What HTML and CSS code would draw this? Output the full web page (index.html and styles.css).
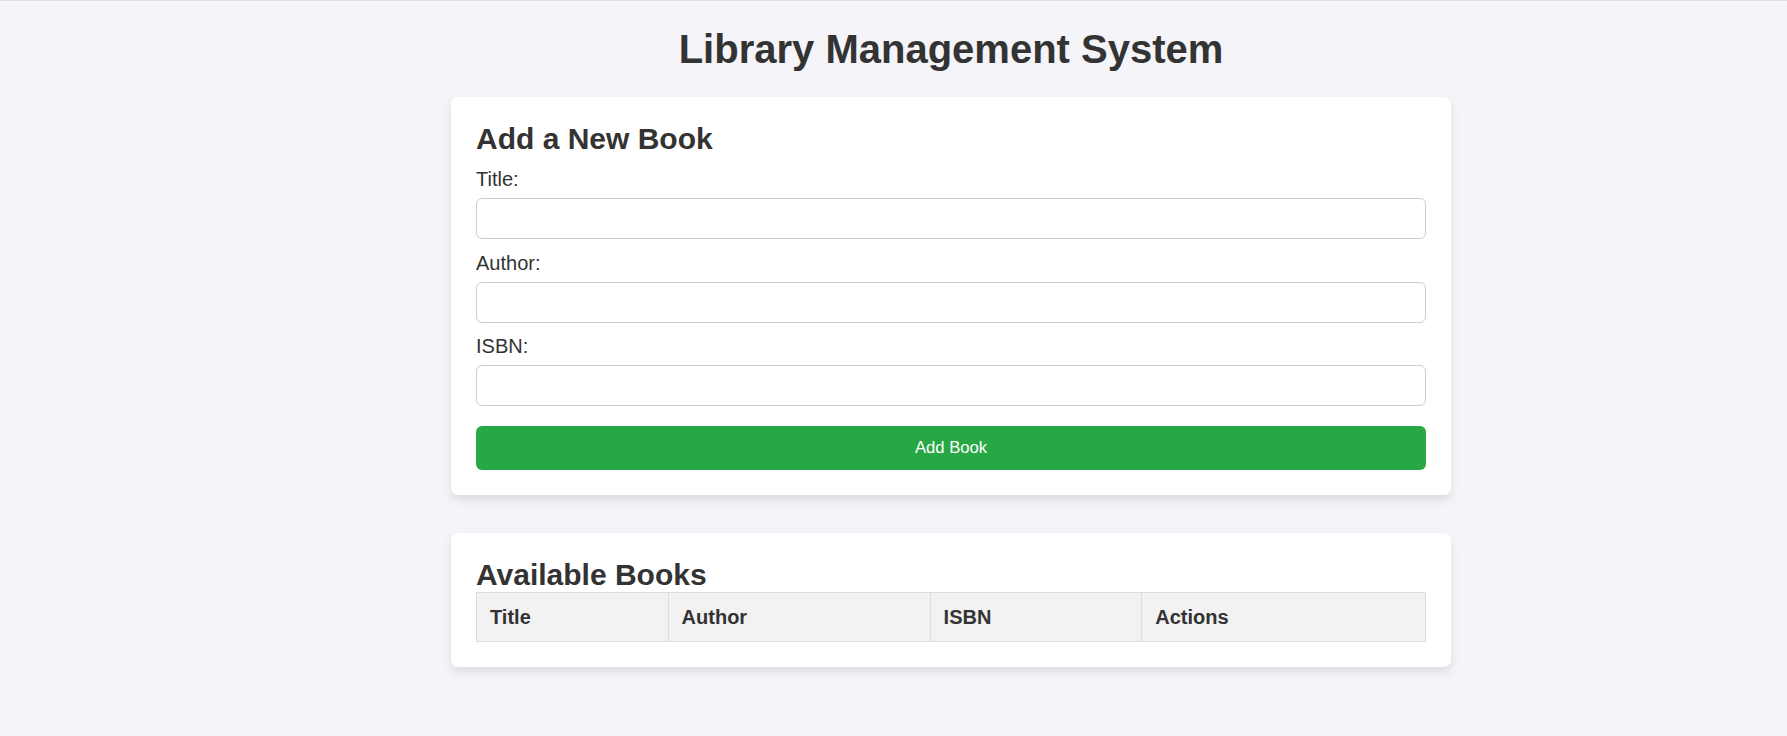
FILE: index.html
```html
<!DOCTYPE html>
<html lang="en">
<head>
<meta charset="utf-8">
<title>Library Management System</title>
<link rel="stylesheet" href="styles.css">
</head>
<body>
<div class="page">
  <div class="container">
    <h1 class="page-title">Library Management System</h1>

    <section class="card">
      <h2 class="card-title form-title">Add a New Book</h2>
      <form class="book-form">
        <label class="field-label" for="title">Title:</label>
        <input class="field-input" type="text" id="title">
        <label class="field-label" for="author">Author:</label>
        <input class="field-input" type="text" id="author">
        <label class="field-label" for="isbn">ISBN:</label>
        <input class="field-input last" type="text" id="isbn">
        <button class="btn-add" type="button">Add Book</button>
      </form>
    </section>

    <section class="card">
      <h2 class="card-title">Available Books</h2>
      <table class="books-table">
        <colgroup>
          <col class="c-title">
          <col class="c-author">
          <col class="c-isbn">
          <col class="c-actions">
        </colgroup>
        <thead>
          <tr>
            <th>Title</th>
            <th>Author</th>
            <th>ISBN</th>
            <th>Actions</th>
          </tr>
        </thead>
        <tbody></tbody>
      </table>
    </section>
  </div>
</div>
</body>
</html>
```

FILE: styles.css
```css
html, body {
  margin: 0;
  padding: 0;
}

body {
  background: #f4f4f9;
  color: #333333;
  font-family: "Liberation Sans", Arial, sans-serif;
  border-top: 1px solid #dde1dc;
}

.page {
  padding-left: 115px;
}

.container {
  width: 1000px;
  margin: 0 auto;
}

.page-title {
  font-size: 40px;
  font-weight: bold;
  text-align: center;
  margin: 26px 0 25px;
  line-height: normal;
}

.card {
  background: #ffffff;
  border-radius: 7px;
  padding: 25px;
  box-shadow: 0 5px 10px rgba(0, 0, 0, 0.1);
  margin-bottom: 38.3px;
}

.card-title {
  font-size: 30px;
  font-weight: bold;
  margin: 0;
  line-height: normal;
}

.form-title {
  margin-bottom: 12px;
}

.book-form {
  display: flex;
  flex-direction: column;
}

.field-label {
  display: block;
  font-size: 20px;
  line-height: 23px;
  margin-bottom: 7px;
}

.field-input {
  box-sizing: border-box;
  width: 100%;
  height: 41px;
  padding: 10px;
  border: 1px solid #cccccc;
  border-radius: 6px;
  font-family: "Liberation Sans", Arial, sans-serif;
  font-size: 16.67px;
  margin: 0 0 12.5px;
  background: #ffffff;
}

.field-input.last {
  margin-bottom: 19.5px;
}

.btn-add {
  box-sizing: border-box;
  width: 100%;
  height: 44.7px;
  border: none;
  border-radius: 6px;
  background: #28a745;
  color: #ffffff;
  font-family: "Liberation Sans", Arial, sans-serif;
  font-size: 16.67px;
  padding: 0;
  cursor: pointer;
}

.books-table {
  width: 100%;
  border-collapse: collapse;
  table-layout: fixed;
}

.books-table th {
  background: #f2f2f2;
  border: 1px solid #dddddd;
  text-align: left;
  font-size: 20px;
  font-weight: bold;
  line-height: 23px;
  padding: 12.5px 13px;
}

.c-title { width: 20.19%; }
.c-author { width: 27.61%; }
.c-isbn { width: 22.30%; }
.c-actions { width: 29.90%; }
```
